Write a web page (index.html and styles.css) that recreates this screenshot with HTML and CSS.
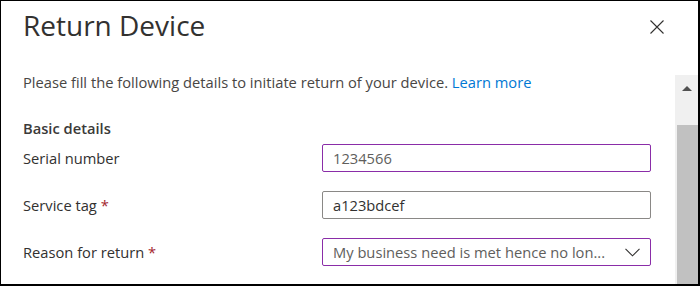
FILE: index.html
```html
<!DOCTYPE html>
<html lang="en">
<head>
    <meta charset="UTF-8">
    <title>Return Device</title>
    <link rel="stylesheet" href="styles.css">
</head>
<body>
    <div class="panel">
        <div class="header">
            <h1>Return Device</h1>
            <button class="close" aria-label="Close">
                <svg width="14" height="14" viewBox="0 0 14 14">
                    <path d="M0.5 0.5L13.5 13.5M13.5 0.5L0.5 13.5" stroke="#323130" stroke-width="1.1" fill="none"/>
                </svg>
            </button>
        </div>

        <div class="body">
            <div class="content">
                <p class="intro">Please fill the following details to initiate return of your device. <a href="#">Learn more</a></p>

                <h3 class="section">Basic details</h3>

                <div class="form">
                    <label class="label">Serial number</label>
                    <div class="field field-active">1234566</div>

                    <label class="label">Service tag <span class="req">*</span></label>
                    <div class="field field-filled">a123bdcef</div>

                    <label class="label">Reason for return <span class="req">*</span></label>
                    <div class="field field-active field-select">
                        <span class="select-text">My business need is met hence no lon...</span>
                        <svg width="15" height="9" viewBox="0 0 15 9">
                            <path d="M0.5 0.8L7.5 7.8L14.5 0.8" stroke="#323130" stroke-width="1.1" fill="none"/>
                        </svg>
                    </div>
                </div>
            </div>

            <div class="scrollbar">
                <div class="scroll-btn"><span class="arrow-up"></span></div>
                <div class="scroll-thumb"></div>
            </div>
        </div>
    </div>
</body>
</html>
```

FILE: styles.css
```css
* {
    margin: 0;
    padding: 0;
    box-sizing: border-box;
}

body {
    font-family: "Open Sans", "Noto Sans", sans-serif;
    color: #323130;
    background: white;
}

.panel {
    width: 700px;
    height: 286px;
    border: 1px solid #000;
    border-right-width: 2px;
    border-bottom-width: 2px;
    display: flex;
    flex-direction: column;
    overflow: hidden;
}

.header {
    height: 71px;
    display: flex;
    justify-content: space-between;
    align-items: flex-start;
    padding: 6px 34px 0 22px;
}

h1 {
    font-size: 28px;
    font-weight: 400;
    line-height: 36px;
    color: #323130;
}

.close {
    border: none;
    background: none;
    margin-top: 13px;
    width: 14px;
    height: 14px;
    display: flex;
}

.body {
    flex: 1;
    display: flex;
    min-height: 0;
}

.content {
    flex: 1;
    padding: 0 24px 0 22px;
}

.intro {
    font-size: 14.7px;
    line-height: 20px;
    color: #484644;
    white-space: nowrap;
}

.intro a {
    color: #0078d4;
    text-decoration: none;
}

.section {
    margin-top: 26px;
    font-size: 14.7px;
    font-weight: 600;
    line-height: 20px;
    color: #3b3a39;
}

.form {
    margin-top: 6px;
    display: grid;
    grid-template-columns: 299px 1fr;
    row-gap: 19px;
    align-items: center;
}

.label {
    font-size: 14.7px;
    line-height: 20px;
}

.req {
    color: #a4262c;
}

.field {
    height: 28px;
    border: 1px solid #8a8886;
    border-radius: 2px;
    padding: 0 10px;
    font-size: 14.7px;
    line-height: 26px;
    color: #323130;
}

.field-active {
    border-color: #8a2da8;
    color: #605e5c;
}

.field-select {
    display: flex;
    justify-content: space-between;
    align-items: center;
}

.select-text {
    white-space: nowrap;
    overflow: hidden;
}

.scrollbar {
    width: 23px;
    margin-top: 3px;
    background: #f0f0f0;
    display: flex;
    flex-direction: column;
}

.scroll-btn {
    height: 50px;
    display: flex;
    justify-content: center;
    padding-top: 11px;
}

.arrow-up {
    width: 0;
    height: 0;
    border-left: 5px solid transparent;
    border-right: 5px solid transparent;
    border-bottom: 5px solid #505050;
}

.scroll-thumb {
    flex: 1;
    margin: 0 0 0 2px;
    background: #c1c1c1;
}
```
